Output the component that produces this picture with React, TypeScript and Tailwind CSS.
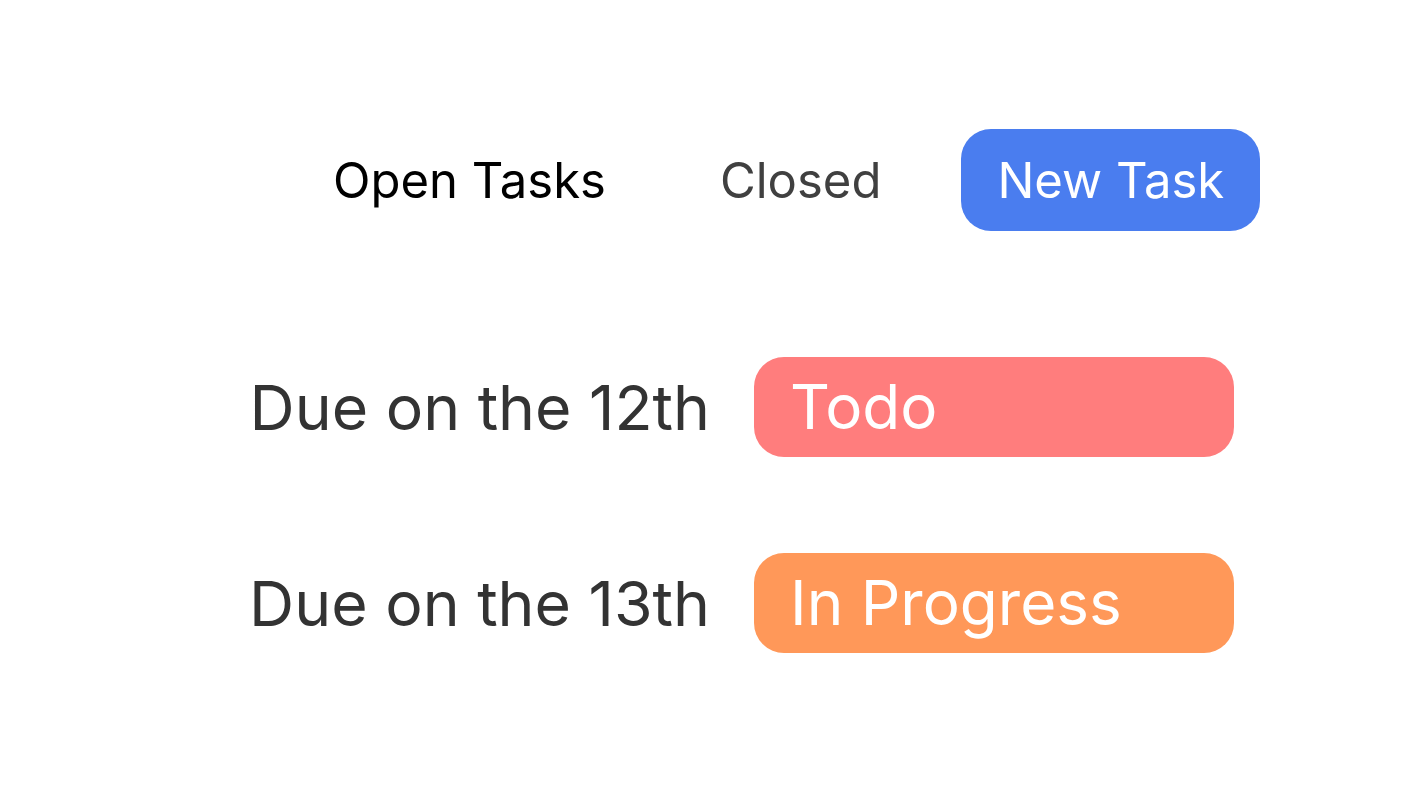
import React from "react";

type Task = { due: string; status: string; color: string };

const tasks: Task[] = [
  { due: "Due on the 12th", status: "Todo", color: "bg-[#ff7d7d]" },
  { due: "Due on the 13th", status: "In Progress", color: "bg-[#ff9859]" },
];

export default function App() {
  return (
    <div className="h-[800px] w-full bg-white font-['Inter','Liberation_Sans',sans-serif]">
      <div className="flex items-center pl-[333px] pt-[129px]">
        <span className="text-[49px] leading-none text-black">Open Tasks</span>
        <span className="ml-[114px] text-[49px] leading-none text-[#404040]">Closed</span>
        <button
          type="button"
          className="ml-[80px] flex h-[102px] items-center rounded-[30px] bg-[#4a7def] px-[36px] text-[49px] leading-none text-white"
        >
          New Task
        </button>
      </div>

      <div className="mt-[126px] grid grid-cols-[710px_480px] gap-x-[44px] gap-y-[96px]">
        {tasks.map((t) => (
          <React.Fragment key={t.due}>
            <div className="flex items-center justify-end text-[62.5px] leading-none text-[#333333]">
              {t.due}
            </div>
            <div
              className={`flex h-[100px] items-center rounded-[30px] pl-[36px] text-[62px] leading-none text-white ${t.color}`}
            >
              {t.status}
            </div>
          </React.Fragment>
        ))}
      </div>
    </div>
  );
}
